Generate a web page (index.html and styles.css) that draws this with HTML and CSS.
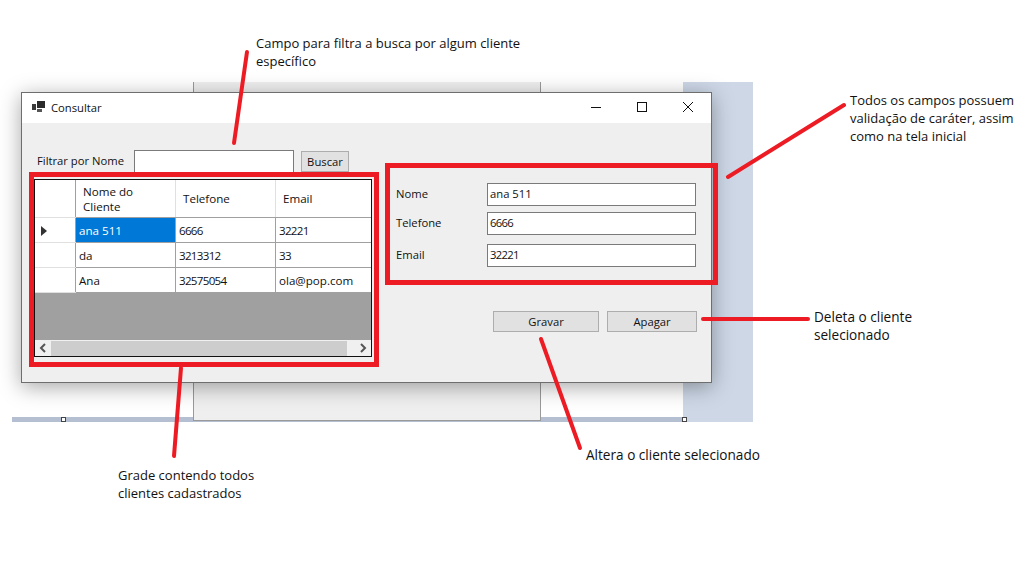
FILE: index.html
```html
<!DOCTYPE html>
<html lang="en">
<head>
  <meta charset="UTF-8" />
  <title>Consultar</title>
  <link rel="stylesheet" href="styles.css">
</head>
<body>

  <div class="canvas">
    <!-- designer surface behind the form -->
    <div class="design-blue"></div>
    <div class="design-strip"></div>
    <div class="design-dialog"></div>
    <div class="handle handle-left"></div>
    <div class="handle handle-right"></div>

    <div class="window">
      <div class="titlebar">
        <svg class="app-icon" width="14" height="12" viewBox="0 0 14 12">
          <rect x="0" y="3" width="4" height="6" fill="#3a3a3a"/>
          <rect x="5" y="0" width="8" height="7" fill="#2b2b2b"/>
          <rect x="5" y="8" width="5" height="3" fill="#555"/>
        </svg>
        <span class="title">Consultar</span>
        <div class="win-buttons">
          <svg width="12" height="12" viewBox="0 0 12 12"><path d="M1 6.5H11" stroke="#111" fill="none"/></svg>
          <svg width="12" height="12" viewBox="0 0 12 12"><rect x="1.5" y="1.5" width="9" height="9" stroke="#111" fill="none"/></svg>
          <svg width="12" height="12" viewBox="0 0 12 12"><path d="M1 1L11 11M11 1L1 11" stroke="#111" fill="none"/></svg>
        </div>
      </div>

      <div class="client">
        <div class="left-col">
          <div class="filter-row">
            <label class="filter-label">Filtrar por Nome</label>
            <div class="textbox filter-box"></div>
            <button class="btn btn-search">Buscar</button>
          </div>

          <div class="grid">
            <table>
              <thead>
                <tr class="head-row">
                  <th class="row-head"></th>
                  <th class="col-name">Nome do<br>Cliente</th>
                  <th class="col-phone">Telefone</th>
                  <th class="col-email">Email</th>
                </tr>
              </thead>
              <tbody>
                <tr>
                  <td class="row-head"><span class="arrow"></span></td>
                  <td class="selected">ana 511</td>
                  <td class="digits">6666</td>
                  <td class="digits">32221</td>
                </tr>
                <tr>
                  <td class="row-head"></td>
                  <td>da</td>
                  <td class="digits">3213312</td>
                  <td class="digits">33</td>
                </tr>
                <tr>
                  <td class="row-head"></td>
                  <td>Ana</td>
                  <td class="digits">32575054</td>
                  <td>ola@pop.com</td>
                </tr>
              </tbody>
            </table>
            <div class="grid-empty"></div>
            <div class="scrollbar">
              <svg width="16" height="16" viewBox="0 0 16 16"><path d="M10 4L6 8L10 12" stroke="#555" stroke-width="2" fill="none"/></svg>
              <div class="thumb"></div>
              <svg class="scroll-next" width="16" height="16" viewBox="0 0 16 16"><path d="M6 4L10 8L6 12" stroke="#555" stroke-width="2" fill="none"/></svg>
            </div>
          </div>
        </div>

        <div class="right-col">
          <div class="field field-first">
            <label>Nome</label>
            <div class="textbox">ana 511</div>
          </div>
          <div class="field">
            <label>Telefone</label>
            <div class="textbox digits">6666</div>
          </div>
          <div class="field field-last">
            <label>Email</label>
            <div class="textbox digits">32221</div>
          </div>
          <div class="actions">
            <button class="btn btn-save">Gravar</button>
            <button class="btn btn-delete">Apagar</button>
          </div>
        </div>
      </div>
    </div>

    <!-- annotations drawn over the screenshot -->
    <div class="mark mark-grid"></div>
    <div class="mark mark-fields"></div>
    <svg class="arrows" width="1036" height="572" viewBox="0 0 1036 572">
      <g stroke="#ed1c24" stroke-width="4" stroke-linecap="round" fill="none">
        <path d="M247 52L234 143"/>
        <path d="M181 368L174 456"/>
        <path d="M844 105L728 177"/>
        <path d="M703 319H808"/>
        <path d="M541 339L580 448"/>
      </g>
    </svg>

    <p class="note note-filter">Campo para filtra a busca por algum cliente<br>específico</p>
    <p class="note note-valid">Todos os campos possuem<br>validação de caráter, assim<br>como na tela inicial</p>
    <p class="note note-delete">Deleta o cliente<br>selecionado</p>
    <p class="note note-save">Altera o cliente selecionado</p>
    <p class="note note-list">Grade contendo todos<br>clientes cadastrados</p>
  </div>

</body>
</html>
```

FILE: styles.css
```css
body {
  margin: 0;
  background: white;
  font-family: "Open Sans", "Noto Sans", Arial, sans-serif;
  font-size: 11.25px;
  color: #111;
}

.canvas {
  position: relative;
  width: 1036px;
  height: 572px;
  overflow: hidden;
}

.design-blue {
  position: absolute;
  left: 683px;
  top: 82px;
  width: 70px;
  height: 340px;
  background: #cdd7e6;
}

.design-strip {
  position: absolute;
  left: 12px;
  top: 417px;
  width: 672px;
  height: 5px;
  background: #b4bfd2;
}

.design-dialog {
  position: absolute;
  left: 193px;
  top: 82px;
  width: 346px;
  height: 338px;
  background: #efefef;
  border: 1px solid #9a9a9a;
  border-top: none;
}

.handle {
  position: absolute;
  top: 417px;
  width: 3px;
  height: 3px;
  background: white;
  border: 1px solid #444;
}

.handle-left { left: 61px; }
.handle-right { left: 682px; }

.window {
  position: absolute;
  left: 21px;
  top: 92px;
  width: 689px;
  height: 289px;
  background: #efefef;
  border: 1px solid #6e6e6e;
  box-shadow: 0 4px 20px rgba(0,0,0,0.35);
}

.titlebar {
  box-sizing: border-box;
  display: flex;
  align-items: center;
  height: 30px;
  padding: 0 0 2px 10px;
  background: white;
}

.app-icon {
  margin-right: 5px;
}

.win-buttons {
  display: flex;
  gap: 34px;
  margin-left: auto;
  margin-right: 17px;
}

.client {
  display: flex;
}

.left-col {
  width: 351px;
  padding: 27px 0 0 12px;
}

.filter-row {
  display: flex;
  align-items: center;
  height: 23px;
  margin-bottom: 6px;
}

.filter-label {
  width: 97px;
  padding: 0 0 2px 3px;
  white-space: nowrap;
}

.textbox {
  box-sizing: border-box;
  height: 23px;
  padding: 2px 2px;
  background: white;
  border: 1px solid #7a7a7a;
  line-height: 15px;
}

.filter-box {
  width: 160px;
}

.btn {
  box-sizing: border-box;
  height: 21px;
  padding: 0;
  background: #e1e1e1;
  border: 1px solid #adadad;
  font-family: inherit;
  font-size: 11.25px;
  color: #111;
}

.btn-search {
  width: 48px;
  margin-left: 7px;
}

.grid {
  box-sizing: border-box;
  width: 338px;
  height: 178px;
  background: #a0a0a0;
  border: 1px solid #111;
  display: flex;
  flex-direction: column;
}

table {
  border-collapse: collapse;
  table-layout: fixed;
  width: 336px;
  background: white;
  font-size: 11.6px;
}

th {
  height: 37px;
  padding: 0 0 0 7px;
  font-weight: normal;
  text-align: left;
  line-height: 15px;
  border-right: 1px solid #e0e0e0;
  border-bottom: 1px solid #a0a0a0;
}

td {
  box-sizing: border-box;
  height: 25px;
  padding: 0 3px;
  border-right: 1px solid #a0a0a0;
  border-bottom: 1px solid #a0a0a0;
  white-space: nowrap;
}

th:last-child, td:last-child {
  border-right: none;
}

.row-head {
  width: 40px;
  border-right: 1px solid #a0a0a0;
  border-bottom: 1px solid #e0e0e0;
  padding: 0;
}

.col-name { width: 92px; }
.col-phone { width: 92px; }

.selected {
  background: #0078d7;
  color: white;
}

.digits {
  letter-spacing: -0.7px;
}

.arrow {
  display: block;
  width: 0;
  height: 0;
  margin: 1px 0 0 6px;
  border-left: 6px solid #333;
  border-top: 5px solid transparent;
  border-bottom: 5px solid transparent;
}

.grid-empty {
  flex: 1;
}

.scrollbar {
  display: flex;
  align-items: center;
  height: 16px;
  background: #f0f0f0;
}

.thumb {
  width: 296px;
  height: 15px;
  background: #cdcdcd;
}

.scroll-next {
  margin-left: auto;
}

.right-col {
  flex: 1;
  padding: 60px 0 0 11px;
}

.field {
  display: flex;
  align-items: center;
  margin-bottom: 6px;
}

.field label {
  width: 91px;
  padding-bottom: 2px;
}

.field .textbox {
  width: 209px;
}

.field-last {
  margin-top: 9px;
  margin-bottom: 44px;
}

.actions {
  display: flex;
  gap: 8px;
  margin-left: 97px;
}

.btn-save { width: 106px; }
.btn-delete { width: 90px; }

.mark {
  position: absolute;
  box-sizing: border-box;
  border: 5px solid #ed1c24;
}

.mark-grid {
  left: 29px;
  top: 172px;
  width: 350px;
  height: 195px;
}

.mark-fields {
  left: 385px;
  top: 163px;
  width: 333px;
  height: 122px;
}

.arrows {
  position: absolute;
  left: 0;
  top: 0;
}

.note {
  position: absolute;
  margin: 0;
  font-size: 13px;
  line-height: 18px;
  color: #111;
  white-space: nowrap;
}

.note-filter { left: 256px; top: 34px; }
.note-valid { left: 850px; top: 91px; }
.note-delete { left: 814px; top: 308px; font-size: 13.6px; }
.note-save { left: 586px; top: 446px; font-size: 13.6px; }
.note-list { left: 118px; top: 466px; }
```
